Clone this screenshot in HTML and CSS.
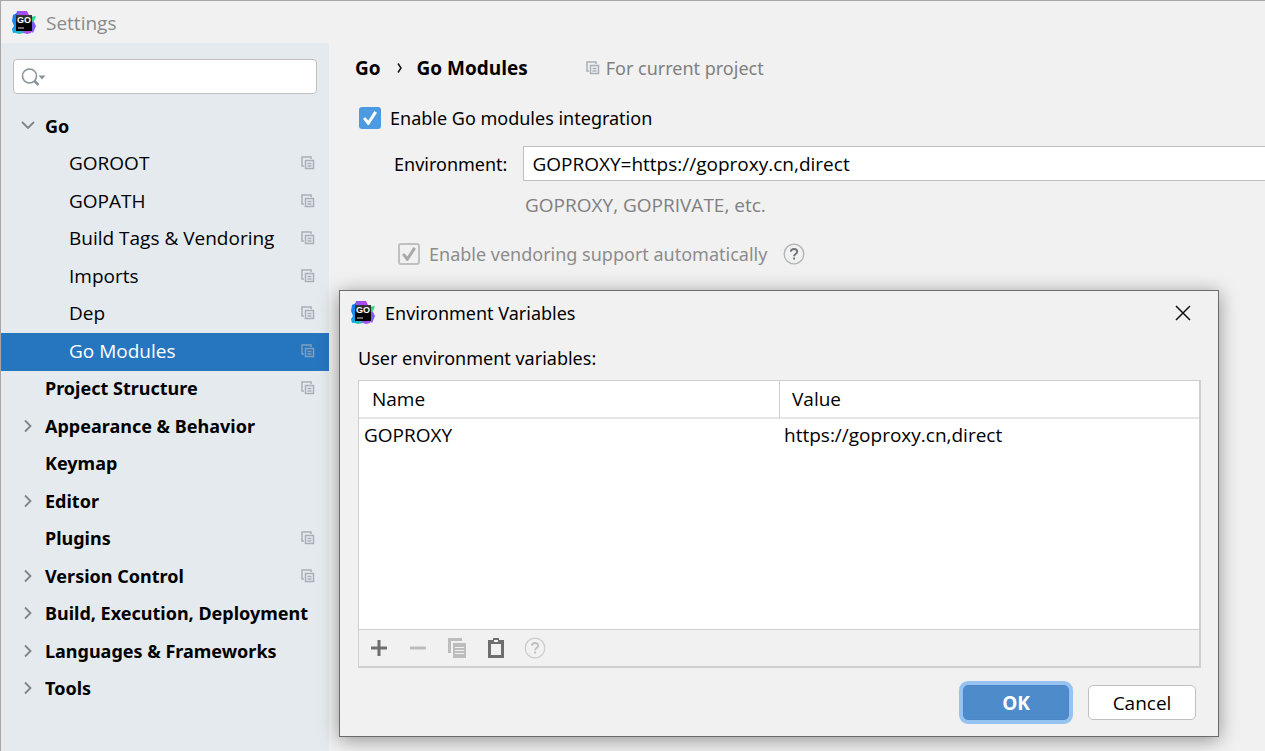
FILE: index.html
```html
<!DOCTYPE html>
<html lang="en">
<head>
<meta charset="utf-8">
<title>Settings</title>
<link rel="stylesheet" href="styles.css">
</head>
<body>
<svg class="sprite" aria-hidden="true">
  <defs>
    <linearGradient id="g-purple" x1="0" y1="0" x2="1" y2="0"><stop offset="0" stop-color="#7a5cf0"/><stop offset="1" stop-color="#c63df5"/></linearGradient>
    <linearGradient id="g-blue" x1="0" y1="0" x2="0" y2="1"><stop offset="0" stop-color="#1a73f5"/><stop offset="1" stop-color="#0fa6ee"/></linearGradient>
    <linearGradient id="g-base" x1="0" y1="0" x2="1" y2="0"><stop offset="0" stop-color="#12a5e8"/><stop offset=".4" stop-color="#1cc5b4"/><stop offset=".6" stop-color="#a04df0"/><stop offset="1" stop-color="#b24cf2"/></linearGradient>
    <linearGradient id="g-tile" x1="0" y1="0" x2="0" y2="1"><stop offset="0" stop-color="#3a3a3a"/><stop offset=".6" stop-color="#000"/></linearGradient>
  </defs>
  <symbol id="logo" viewBox="0 0 24 24">
    <path d="M5 0h10l2 4v6H4V4z" fill="url(#g-purple)"/>
    <path d="M1 4l4-2v19l-4 1-1-4 2-3-2-5z" fill="url(#g-blue)"/>
    <path d="M18 6l6-1-3 7z" fill="#21d789"/>
    <path d="M19 10l3 1 2 4-3 7-3-3z" fill="#7b5cf5"/>
    <path d="M1 18h20l-2 4-4 1-3-1-5 1-6-2z" fill="url(#g-base)"/>
    <rect x="4" y="4" width="16" height="16" fill="url(#g-tile)"/>
    <path d="M6 17h6" stroke="#ddd" stroke-width="1"/>
  </symbol>
  <symbol id="project" viewBox="0 0 14 14">
    <path d="M3 10H1V1h9v2" fill="none" stroke="currentColor" stroke-width="1.500"/>
    <path d="M4.500 4.500h8v8h-8zM6.500 7.500h4M6.500 10h4" fill="none" stroke="currentColor" stroke-width="1.500"/>
  </symbol>
  <symbol id="chev-right" viewBox="0 0 14 14"><path d="M4 1.500l5.500 5.500L4 12.500" fill="none" stroke="currentColor" stroke-width="1.800"/></symbol>
  <symbol id="chev-down" viewBox="0 0 14 14"><path d="M1 3l6 6 6-6" fill="none" stroke="currentColor" stroke-width="1.800"/></symbol>
  <symbol id="help" viewBox="0 0 22 22">
    <circle cx="11" cy="11" r="9.800" fill="none" stroke="currentColor" stroke-width="1.300"/>
    <path class="help-mark" d="M7.800 8.700C8 6.900 9.200 6 11 6c1.900 0 3.200 1.100 3.200 2.700 0 2.200-3.100 2.300-3.100 4.500M11.100 14.500v2" fill="none" stroke-width="1.900"/>
  </symbol>
</svg>

<div class="window">
  <header class="titlebar">
    <svg class="logo" viewBox="0 0 24 24"><use href="#logo" width="24" height="24"/><text x="12" y="12" class="logo-text">GO</text></svg>
    <span>Settings</span>
  </header>
  <div class="body">
    <aside class="sidebar">
      <label class="search">
        <svg class="search-icon" viewBox="0 0 26 20" aria-hidden="true"><circle cx="8.500" cy="9" r="7" fill="none" stroke="currentColor" stroke-width="1.500"/><path d="M13 13.500l4.500 4.500" stroke="currentColor" stroke-width="2.500"/><path d="M17.500 8.500h7l-3.500 4z" fill="currentColor"/></svg>
        <input type="search" aria-label="Search settings">
      </label>
      <nav aria-label="Settings pages">
        <ul class="tree">
          <li><a class="row" href="#"><svg class="chev"><use href="#chev-down"/></svg><span>Go</span></a></li>
          <li><a class="row child" href="#"><span>GOROOT</span><svg class="scope"><use href="#project"/></svg></a></li>
          <li><a class="row child" href="#"><span>GOPATH</span><svg class="scope"><use href="#project"/></svg></a></li>
          <li><a class="row child" href="#"><span>Build Tags &amp; Vendoring</span><svg class="scope"><use href="#project"/></svg></a></li>
          <li><a class="row child" href="#"><span>Imports</span><svg class="scope"><use href="#project"/></svg></a></li>
          <li><a class="row child" href="#"><span>Dep</span><svg class="scope"><use href="#project"/></svg></a></li>
          <li><a class="row child selected" href="#" aria-current="page"><span>Go Modules</span><svg class="scope"><use href="#project"/></svg></a></li>
          <li><a class="row leaf" href="#"><span>Project Structure</span><svg class="scope"><use href="#project"/></svg></a></li>
          <li><a class="row" href="#"><svg class="chev"><use href="#chev-right"/></svg><span>Appearance &amp; Behavior</span></a></li>
          <li><a class="row leaf" href="#"><span>Keymap</span></a></li>
          <li><a class="row" href="#"><svg class="chev"><use href="#chev-right"/></svg><span>Editor</span></a></li>
          <li><a class="row leaf" href="#"><span>Plugins</span><svg class="scope"><use href="#project"/></svg></a></li>
          <li><a class="row" href="#"><svg class="chev"><use href="#chev-right"/></svg><span>Version Control</span><svg class="scope"><use href="#project"/></svg></a></li>
          <li><a class="row" href="#"><svg class="chev"><use href="#chev-right"/></svg><span>Build, Execution, Deployment</span></a></li>
          <li><a class="row" href="#"><svg class="chev"><use href="#chev-right"/></svg><span>Languages &amp; Frameworks</span></a></li>
          <li><a class="row" href="#"><svg class="chev"><use href="#chev-right"/></svg><span>Tools</span></a></li>
        </ul>
      </nav>
    </aside>

    <main class="content">
      <div class="crumbs">
        <b>Go</b>
        <svg class="crumb-sep" viewBox="0 0 6 10" aria-hidden="true"><path d="M1 .500l3 4.500-3 4.500" fill="none" stroke="#111" stroke-width="1.500"/></svg>
        <b>Go Modules</b>
        <span class="scope-note"><svg class="scope"><use href="#project"/></svg>For current project</span>
      </div>
      <label class="check-row"><input class="check" type="checkbox" checked>Enable Go modules integration</label>
      <div class="env-row">
        <label for="env">Environment:</label>
        <input id="env" class="env-input" type="text" value="GOPROXY=https://goproxy.cn,direct">
      </div>
      <p class="hint">GOPROXY, GOPRIVATE, etc.</p>
      <div class="vendor-row">
        <label class="check-row"><input class="check" type="checkbox" checked disabled>Enable vendoring support automatically</label>
        <button class="help-button" type="button" aria-label="Help"><svg class="help"><use href="#help"/></svg></button>
      </div>
    </main>
  </div>
</div>

<section class="dialog" role="dialog" aria-labelledby="dialog-title">
  <header class="dialog-title">
    <svg class="logo" viewBox="0 0 24 24"><use href="#logo" width="24" height="24"/><text x="12" y="12" class="logo-text">GO</text></svg>
    <span id="dialog-title">Environment Variables</span>
    <button class="close" type="button" aria-label="Close"><svg viewBox="0 0 16 16"><path d="M1 1l14 14M15 1L1 15" stroke="#111" stroke-width="1.500"/></svg></button>
  </header>
  <p class="caption">User environment variables:</p>
  <div class="panel">
    <div class="table-area">
      <table class="vars">
        <thead><tr><th scope="col">Name</th><th scope="col">Value</th></tr></thead>
        <tbody><tr><td>GOPROXY</td><td>https://goproxy.cn,direct</td></tr></tbody>
      </table>
    </div>
    <div class="tools">
      <button type="button" aria-label="Add"><svg viewBox="0 0 20 20"><path d="M10 2v16M2 10h16" stroke="#6e6e6e" stroke-width="3"/></svg></button>
      <button type="button" aria-label="Remove" disabled><svg viewBox="0 0 20 20"><path d="M2 10h16" stroke="#bdbdbd" stroke-width="3"/></svg></button>
      <button type="button" aria-label="Copy" disabled><svg viewBox="0 0 20 20"><path d="M1 0h14v3H4v12H1z" fill="#bdbdbd"/><path d="M6 5h13v15H6z" fill="#bdbdbd"/><path d="M8 9.500h9M8 12.500h9M8 15.500h9" stroke="#f1f1f1"/></svg></button>
      <button type="button" aria-label="Paste"><svg viewBox="0 0 20 20"><path d="M2 2h5V0h6v2h5v18H2zM5 6v11h10V6zM8 2v2h4V2z" fill="#6e6e6e" fill-rule="evenodd"/></svg></button>
      <button type="button" aria-label="Help" disabled><svg class="help muted"><use href="#help"/></svg></button>
    </div>
  </div>
  <footer class="actions">
    <button class="btn primary" type="button">OK</button>
    <button class="btn" type="button">Cancel</button>
  </footer>
</section>
</body>
</html>
```
FILE: styles.css
```css
* { box-sizing: border-box; }

body {
  margin: 0;
  background: #f1f1f1;
  color: #000;
  font: 18px/24px "Noto Sans", "Open Sans", sans-serif;
}

button, input { font: inherit; color: inherit; }
button { border: 0; padding: 0; background: none; }
p { margin: 0; }
svg { display: block; flex: none; }
.sprite { position: absolute; width: 0; height: 0; }

.titlebar, .crumbs b, .row.child, .env-input, .hint, .vars, .btn {
  font-family: "Open Sans", "Noto Sans", sans-serif;
  font-size: 19px;
}

.window {
  display: flex;
  flex-direction: column;
  min-height: 100vh;
  border-top: 1px solid #a6a6a6;
  border-left: 1px solid #a6a6a6;
}

.titlebar {
  display: flex;
  align-items: center;
  gap: 10px;
  height: 42px;
  padding: 2px 0 0 11px;
  color: #8a8a8a;
}

.logo { width: 24px; height: 24px; overflow: visible; }
.logo-text { font: bold 9px "Liberation Sans", sans-serif; fill: #fff; text-anchor: middle; }

.body { display: flex; flex: 1; }

.sidebar {
  flex: none;
  width: 328px;
  padding-top: 16px;
  background: #e5eaee;
}

.search {
  display: flex;
  align-items: center;
  height: 35px;
  margin: 0 12px 14px;
  padding-left: 7px;
  border: 1px solid #bfbfbf;
  border-radius: 4px;
  background: #fff;
}
.search-icon { width: 26px; height: 20px; color: #87929a; }
.search input { flex: 1; min-width: 0; border: 0; outline: 0; background: none; }

.tree {
  display: grid;
  grid-template-columns: minmax(0, 1fr);
  grid-auto-rows: 1fr;
  min-height: 600px;
  margin: 0;
  padding: 0;
  list-style: none;
}
.row {
  display: flex;
  align-items: center;
  height: 100%;
  padding: 0 14px 2px 20px;
  color: #000;
  font-weight: bold;
  text-decoration: none;
}
.row span { white-space: nowrap; }
.row.leaf { padding-left: 44px; }
.row.child { padding-left: 68px; font-weight: normal; }
.row.selected { background: #2675bf; color: #fff; }
.chev { width: 14px; height: 14px; margin-right: 10px; color: #7f8488; }
.scope { width: 14px; height: 14px; color: #a7b0b8; }
.row .scope { margin-left: auto; }
.row.selected .scope { color: #7f9fbe; }

.content { flex: 1; min-width: 0; padding: 13px 0 0 26px; }

.crumbs { display: flex; align-items: center; }
.crumb-sep { width: 6px; height: 10px; margin: 0 14px 0 16px; }
.scope-note {
  display: flex;
  align-items: center;
  gap: 6px;
  margin-left: 58px;
  color: #808080;
}

.check-row { display: flex; align-items: center; gap: 9px; }
.crumbs + .check-row { margin: 26px 0 0 4px; }

.check {
  appearance: none;
  width: 22px;
  height: 22px;
  margin: 0;
  border-radius: 3px;
  background: #4c9be2;
  display: grid;
  place-items: center;
}
.check::before {
  content: "";
  width: 14px;
  height: 14px;
  background: #fff;
  clip-path: polygon(0 55%, 16% 44%, 38% 68%, 82% 0, 100% 12%, 42% 100%, 34% 100%);
}
.check:disabled { border: 2px solid #c0c0c0; background: #f1f1f1; }
.check:disabled::before { background: #a9a9a9; }

.env-row {
  display: flex;
  align-items: center;
  gap: 16px;
  margin: 16px 0 0 39px;
}
.env-input {
  flex: 1;
  min-width: 0;
  height: 35px;
  padding: 0 8px;
  border: 1px solid #bfbfbf;
  border-right: 0;
  border-radius: 0;
  background: #fff;
}
.hint { margin: 12px 0 0 170px; color: #808080; }

.vendor-row {
  display: flex;
  align-items: center;
  gap: 16px;
  margin: 25px 0 0 43px;
  color: #8c8c8c;
}
.help { --mark: #6e7378; width: 22px; height: 22px; color: #afb1b3; }
.help-mark { stroke: var(--mark); }
.help.muted { --mark: #c0c0c0; color: #cdcdcd; }

.dialog {
  position: absolute;
  top: 290px;
  left: 339px;
  width: 880px;
  padding: 0 17px 16px 18px;
  border: 1px solid #6b6b6b;
  background: #f1f1f1;
  box-shadow: 0 3px 18px rgba(0, 0, 0, .4);
}
.dialog-title {
  display: flex;
  align-items: center;
  gap: 10px;
  height: 44px;
  margin-left: -7px;
}
.close { margin: 0 10px 0 auto; }
.close svg { width: 16px; height: 16px; }
.caption { margin: 11px 0 10px; }

.panel { border: 1px solid #cfcfcf; border-width: 1px 2px 2px 1px; }
.table-area { min-height: 248px; background: #fff; }
.vars { width: 100%; border-collapse: separate; border-spacing: 0; table-layout: fixed; }
.vars th {
  height: 38px;
  padding: 0 13px;
  border-bottom: 2px solid #e5e5e5;
  font-weight: normal;
  text-align: left;
}
.vars th + th { padding-left: 12px; border-left: 1px solid #d0d0d0; }
.vars td { height: 32px; padding: 0 5px; }

.tools {
  display: flex;
  align-items: center;
  gap: 17px;
  height: 37px;
  padding-left: 9px;
  border-top: 1px solid #cfcfcf;
}
.tools button { width: 22px; height: 22px; display: grid; place-items: center; }
.tools svg { width: 20px; height: 20px; }
.tools .help { width: 22px; height: 22px; }

.actions {
  display: flex;
  justify-content: flex-end;
  gap: 19px;
  margin: 17px 5px 0 0;
}
.btn {
  width: 108px;
  height: 35px;
  border: 1px solid #bfbfbf;
  border-radius: 5px;
  background: #fff;
}
.btn.primary {
  width: 106px;
  border: 1px solid #4a86c6;
  background: #4e8bcb;
  box-shadow: 0 0 0 4px #97c3f3;
  color: #fff;
  font-weight: bold;
}
```
